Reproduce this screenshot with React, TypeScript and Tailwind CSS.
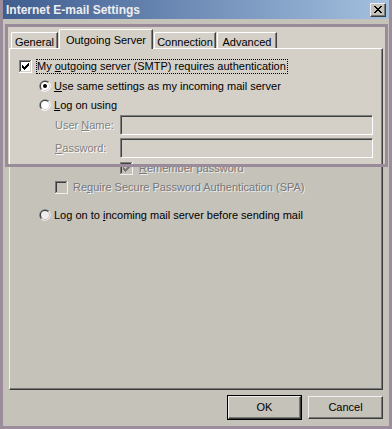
import React from 'react';

const FACE = '#d4d0c8';

// classic 3d check box, 13x13
function CheckBox({ checked, disabled }: { checked?: boolean; disabled?: boolean }) {
  const pattern = ['......x', '.....xx', 'x...xxx', 'xx.xxx.', 'xxxxx..', '.xxx...', '..x....'];
  const pixels: [number, number][] = [];
  pattern.forEach((row, y) => row.split('').forEach((c, x) => c === 'x' && pixels.push([x, y])));
  return (
    <svg width="13" height="13" shapeRendering="crispEdges" className="shrink-0">
      <rect width="13" height="13" fill="#fff" />
      <rect width="12" height="12" fill="#808080" />
      <rect x="1" y="1" width="11" height="11" fill={FACE} />
      <rect x="1" y="1" width="10" height="10" fill="#404040" />
      <rect x="2" y="2" width="9" height="9" fill={disabled ? FACE : '#fff'} />
      {checked &&
        pixels.map(([x, y]) => (
          <rect key={`${x}-${y}`} x={3 + x} y={3 + y} width="1" height="1" fill={disabled ? '#808080' : '#000'} />
        ))}
    </svg>
  );
}

function Radio({ checked }: { checked?: boolean }) {
  return (
    <svg width="12" height="12" className="shrink-0">
      <path d="M1.76 10.24 A6 6 0 0 1 10.24 1.76 Z" fill="#808080" />
      <path d="M10.24 1.76 A6 6 0 0 1 1.76 10.24 Z" fill="#fff" />
      <path d="M2.46 9.54 A5 5 0 0 1 9.54 2.46 Z" fill="#404040" />
      <path d="M9.54 2.46 A5 5 0 0 1 2.46 9.54 Z" fill={FACE} />
      <circle cx="6" cy="6" r="4" fill="#fff" />
      {checked && <circle cx="6" cy="6" r="2" fill="#000" />}
    </svg>
  );
}

function Tab({ label, selected, w }: { label: string; selected?: boolean; w: string }) {
  if (selected) {
    return (
      <div
        className={`${w} relative top-[1px] z-10 h-[20px] ml-[1px] bg-[#d4d0c8] border-l border-t border-white border-r border-r-[#404040] shadow-[inset_-1px_0_0_#808080] rounded-tl-[2px] flex justify-center pt-[2px]`}
      >
        {label}
      </div>
    );
  }
  return (
    <div
      className={`${w} h-[16px] ml-[1px] border-l border-t border-white border-r border-r-[#404040] shadow-[inset_-1px_0_0_#808080] rounded-tl-[2px] flex justify-center pt-[1px]`}
    >
      {label}
    </div>
  );
}

function Btn({ label, isDefault }: { label: string; isDefault?: boolean }) {
  const inner = (
    <div className="w-full h-full border-l border-t border-white border-r border-b border-r-[#404040] border-b-[#404040] shadow-[inset_-1px_-1px_0_#808080] flex items-center justify-center">
      {label}
    </div>
  );
  if (isDefault) {
    return <div className="w-[75px] h-[25px] border border-black">{inner}</div>;
  }
  return <div className="w-[75px] h-[23px]">{inner}</div>;
}

const disabledText = 'text-[#808080] [text-shadow:1px_1px_0_#ffffff]';

export default function App() {
  return (
    <div
      className="relative w-[392px] h-[429px] overflow-hidden bg-[#a898a8] px-[3px] pb-[3px] flex flex-col text-[11px] text-black"
      style={{ fontFamily: "'Liberation Sans', Arial, sans-serif" }}
    >
      <div className="h-[19px] shrink-0 bg-gradient-to-r from-[#45649b] to-[#b0cff0] flex items-center justify-between pl-[3px] pr-[3px]">
        <span className="text-white font-bold text-[12px]">Internet E-mail Settings</span>
        <div className="w-[16px] h-[14px] bg-[#d4d0c8] border-l border-t border-white border-r border-b border-r-[#404040] border-b-[#404040] shadow-[inset_-1px_-1px_0_#808080] flex items-center justify-center">
          <svg width="8" height="7" shapeRendering="crispEdges">
            <path d="M0 0h2v1h-2zM6 0h2v1h-2zM1 1h2v1h-2zM5 1h2v1h-2zM2 2h4v1h-4zM3 3h2v1h-2zM2 4h4v1h-4zM1 5h2v1h-2zM5 5h2v1h-2zM0 6h2v1h-2zM6 6h2v1h-2z" fill="#000" />
          </svg>
        </div>
      </div>

      <div className="flex-1 bg-[#d4d0c8] flex flex-col pt-[10px] pl-[6px] pr-[6px]">
        <div className="h-[19px] flex items-end pl-[1px]">
          <Tab label="General" w="w-[47px]" />
          <Tab label="Outgoing Server" w="w-[94px]" selected />
          <Tab label="Connection" w="w-[62px]" />
          <Tab label="Advanced" w="w-[60px]" />
        </div>

        <div className="w-[374px] h-[342px] border-l border-t border-white border-r border-b border-r-[#404040] border-b-[#404040] shadow-[inset_-1px_-1px_0_#808080] flex flex-col">
          <div className="h-[15px] mt-[10px] ml-[9px] flex items-center">
            <CheckBox checked />
            <span className="ml-[4px] h-[15px] border border-dotted border-black pr-[1px] leading-[13px] whitespace-nowrap">
              My <span className="underline">o</span>utgoing server (SMTP) requires authentication
            </span>
          </div>

          <div className="h-[14px] mt-[5px] ml-[29px] flex items-center gap-[3px]">
            <Radio checked />
            <span>
              <span className="underline">U</span>se same settings as my incoming mail server
            </span>
          </div>

          <div className="h-[14px] mt-[5px] ml-[29px] flex items-center gap-[3px]">
            <Radio />
            <span>
              <span className="underline">L</span>og on using
            </span>
          </div>

          <div className="h-[20px] mt-[3px] flex items-center">
            <span className={`ml-[45px] w-[65px] ${disabledText}`}>
              User <span className="underline">N</span>ame:
            </span>
            <div className="w-[253px] h-[20px] border-l border-t border-[#808080] border-r border-b border-r-white border-b-white shadow-[inset_1px_1px_0_#404040]" />
          </div>

          <div className="h-[20px] mt-[3px] flex items-center">
            <span className={`ml-[45px] w-[65px] ${disabledText}`}>
              <span className="underline">P</span>assword:
            </span>
            <div className="w-[253px] h-[20px] border-l border-t border-[#808080] border-r border-b border-r-white border-b-white shadow-[inset_1px_1px_0_#404040]" />
          </div>

          <div className="h-[13px] mt-[4px] ml-[110px] flex items-center gap-[6px]">
            <CheckBox checked disabled />
            <span className={disabledText}>
              <span className="underline">R</span>emember password
            </span>
          </div>

          <div className="h-[13px] mt-[6px] ml-[45px] flex items-center gap-[5px]">
            <CheckBox disabled />
            <span className={disabledText}>
              Re<span className="underline">q</span>uire Secure Password Authentication (SPA)
            </span>
          </div>

          <div className="h-[12px] mt-[15px] ml-[29px] flex items-center gap-[3px]">
            <Radio />
            <span>
              Log on to <span className="underline">i</span>ncoming mail server before sending mail
            </span>
          </div>
        </div>

        <div className="mt-[5px] flex items-center justify-end gap-[6px]">
          <Btn label="OK" isDefault />
          <Btn label="Cancel" />
        </div>
      </div>

      <div className="absolute left-[5px] top-[24px] w-[383px] h-[143px] border-[3px] border-[#9a8b9a] shadow-[0_0_0_600px_rgba(0,0,0,0.066)] pointer-events-none" />
    </div>
  );
}
